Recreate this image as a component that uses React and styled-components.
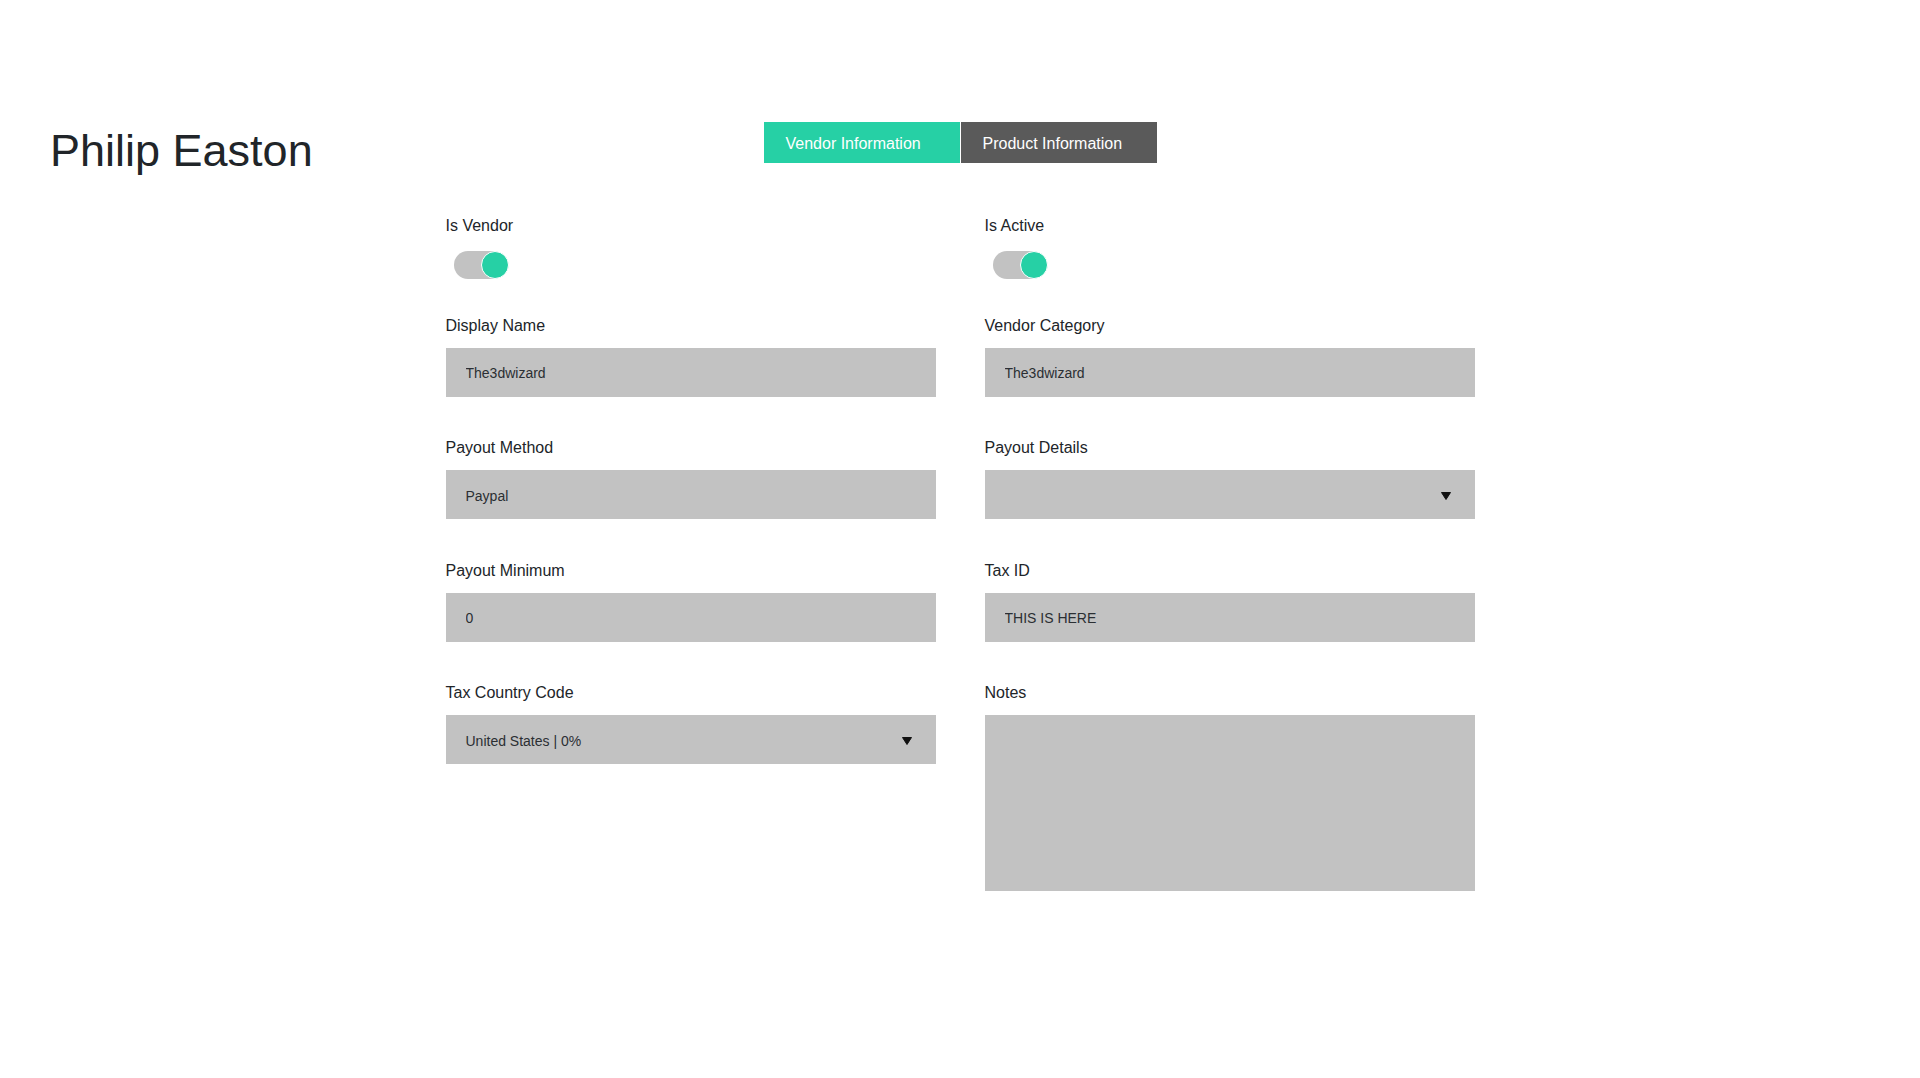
import React from 'react'
import styled, { createGlobalStyle } from 'styled-components'

const GlobalStyle = createGlobalStyle`
    html, body {
        margin: 0;
        padding: 0;
        background: #ffffff;
    }
    body {
        font-family: "Liberation Sans", Arial, sans-serif;
        color: #212529;
    }
`

const Page = styled.div`
    width: 1920px;
    min-height: 1078px;
    box-sizing: border-box;
    padding-top: 122px;
`

const Header = styled.header`
    display: grid;
    grid-template-columns: 1fr auto 1fr;
    align-items: start;
`

const Title = styled.h1`
    margin: 2px 0 0 50px;
    font-size: 45px;
    line-height: 53px;
    font-weight: 400;
    color: #212529;
    white-space: nowrap;
`

const Tabs = styled.nav`
    display: flex;
    gap: 1px;
`

const Tab = styled.button`
    width: 196px;
    height: 41px;
    border: none;
    padding: 2px 0 0 22px;
    text-align: left;
    font-family: "Liberation Sans", Arial, sans-serif;
    font-size: 16px;
    color: #ffffff;
    cursor: pointer;
    background: ${({ active }) => active ? '#26d0a5' : '#5a5a5a'};
`

const Form = styled.form`
    width: 1029px;
    margin: 39px auto 0;
    display: grid;
    grid-template-columns: 490px 490px;
    column-gap: 49px;
    row-gap: 41.5px;
    align-items: start;
`

const Field = styled.div`
    display: flex;
    flex-direction: column;
    ${({ toggle }) => toggle && `
        margin-bottom: -5px;
    `}
`

const Label = styled.label`
    font-size: 16px;
    line-height: 20px;
    color: #212529;
    margin-bottom: ${({ toggle }) => toggle ? '15px' : '12px'};
`

const Switch = styled.div`
    position: relative;
    width: 55px;
    height: 28px;
    margin-left: 8px;
`

const Track = styled.div`
    width: 52px;
    height: 28px;
    border-radius: 14px;
    background: #c2c2c2;
`

const Knob = styled.div`
    position: absolute;
    top: 0;
    right: 0;
    width: 28px;
    height: 28px;
    box-sizing: border-box;
    border-radius: 50%;
    border: 1.5px solid #ffffff;
    background: #26d0a5;
`

const Input = styled.input`
    width: 100%;
    height: 49px;
    box-sizing: border-box;
    border: none;
    outline: none;
    padding: 2px 20px 0;
    background: #c2c2c2;
    font-family: "Liberation Sans", Arial, sans-serif;
    font-size: 14px;
    color: #2b2f33;
`

const Select = styled.div`
    height: 49px;
    box-sizing: border-box;
    padding: 2px 24px 0 20px;
    display: flex;
    align-items: center;
    justify-content: space-between;
    background: #c2c2c2;
    font-size: 14px;
    color: #2b2f33;
`

const TextArea = styled.textarea`
    width: 100%;
    height: 176px;
    box-sizing: border-box;
    border: none;
    outline: none;
    resize: none;
    padding: 14px 20px;
    background: #c2c2c2;
    font-family: "Liberation Sans", Arial, sans-serif;
    font-size: 14px;
    color: #2b2f33;
`

const Caret = () => (
    <svg width="10" height="8" viewBox="0 0 10 8">
        <polygon points="0.5,0.5 9.5,0.5 5,7.5" fill="#111111" stroke="#111111" strokeLinejoin="round" strokeWidth="1" />
    </svg>
)

const ToggleField = ({ label }) => (
    <Field toggle>
        <Label toggle>{ label }</Label>
        <Switch>
            <Track />
            <Knob />
        </Switch>
    </Field>
)

const TextField = ({ label, value }) => (
    <Field>
        <Label>{ label }</Label>
        <Input defaultValue={ value } readOnly />
    </Field>
)

const SelectField = ({ label, value }) => (
    <Field>
        <Label>{ label }</Label>
        <Select>
            <span>{ value }</span>
            <Caret />
        </Select>
    </Field>
)

const App = () => (
    <Page>
        <GlobalStyle />
        <Header>
            <Title>Philip Easton</Title>
            <Tabs>
                <Tab type="button" active>Vendor Information</Tab>
                <Tab type="button">Product Information</Tab>
            </Tabs>
            <div />
        </Header>
        <Form>
            <ToggleField label="Is Vendor" />
            <ToggleField label="Is Active" />
            <TextField label="Display Name" value="The3dwizard" />
            <TextField label="Vendor Category" value="The3dwizard" />
            <TextField label="Payout Method" value="Paypal" />
            <SelectField label="Payout Details" value="" />
            <TextField label="Payout Minimum" value="0" />
            <TextField label="Tax ID" value="THIS IS HERE" />
            <SelectField label="Tax Country Code" value="United States | 0%" />
            <Field>
                <Label>Notes</Label>
                <TextArea readOnly />
            </Field>
        </Form>
    </Page>
)

export default App
